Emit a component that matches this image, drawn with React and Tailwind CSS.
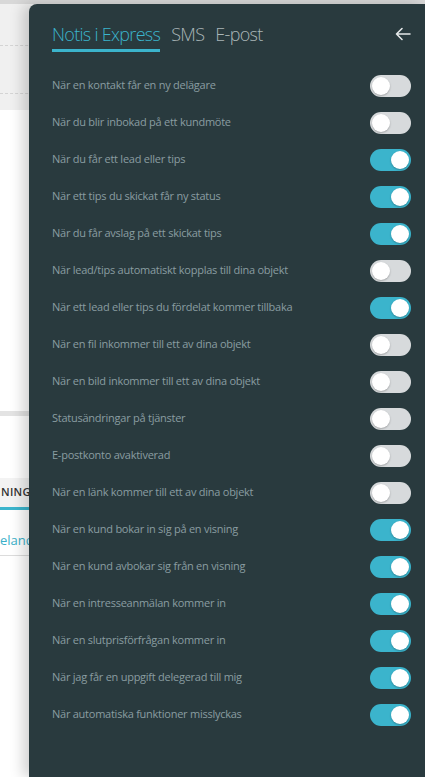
import React from "react";

const rows = [
  ["När en kontakt får en ny delägare", false],
  ["När du blir inbokad på ett kundmöte", false],
  ["När du får ett lead eller tips", true],
  ["När ett tips du skickat får ny status", true],
  ["När du får avslag på ett skickat tips", true],
  ["När lead/tips automatiskt kopplas till dina objekt", false],
  ["När ett lead eller tips du fördelat kommer tillbaka", true],
  ["När en fil inkommer till ett av dina objekt", false],
  ["När en bild inkommer till ett av dina objekt", false],
  ["Statusändringar på tjänster", false],
  ["E-postkonto avaktiverad", false],
  ["När en länk kommer till ett av dina objekt", false],
  ["När en kund bokar in sig på en visning", true],
  ["När en kund avbokar sig från en visning", true],
  ["När en intresseanmälan kommer in", true],
  ["När en slutprisförfrågan kommer in", true],
  ["När jag får en uppgift delegerad till mig", true],
  ["När automatiska funktioner misslyckas", true],
];

function Toggle({ on }) {
  return (
    <div
      className={
        on
          ? "w-[41px] h-[22px] rounded-full bg-[#3bb4cc] flex items-center justify-end px-[2px]"
          : "w-[41px] h-[22px] rounded-full bg-[#d7dadc] flex items-center justify-start px-[2px]"
      }
    >
      <div className="w-[18px] h-[18px] rounded-full bg-white shadow-[0_1px_2px_rgba(0,0,0,0.25)]" />
    </div>
  );
}

export default function App() {
  return (
    <div
      className="relative w-[425px] h-[777px] overflow-hidden bg-[#e2e2e2]"
      style={{ fontFamily: "'Open Sans', 'Noto Sans', sans-serif" }}
    >
      {/* background page */}
      <div className="flex flex-col h-full">
        <div className="h-[4px] bg-[#d8d8d8]" />
        <div className="h-[106px] bg-[#f0f0f0] flex flex-col">
          <div className="h-[42px] border-b border-dashed border-[#d4d4d4]" />
          <div className="h-[48px] border-b border-dashed border-[#d4d4d4]" />
        </div>
        <div className="h-[301px] bg-white" />
        <div className="h-[5px] bg-[#e3e3e3]" />
        <div className="flex-1 bg-white flex flex-col">
          <div className="h-[62px]" />
          <div className="h-[29px] bg-[#f3f3f3] flex items-center">
            <span className="pl-[1px] text-[11px] font-semibold text-[#333] tracking-[0.3px]">NING</span>
          </div>
          <div className="h-[3px] bg-[#3bb4cc]" />
          <div className="h-[46px] border-b border-[#dcdcdc] pt-[22px]">
            <span className="block text-[13px] leading-[16px] text-[#3bb0c9]">elande</span>
          </div>
        </div>
      </div>

      {/* drawer */}
      <div className="absolute left-[29px] top-[4px] right-0 bottom-0 bg-[#293a3e] rounded-tl-[8px] shadow-[-6px_0_14px_rgba(0,0,0,0.18)] pl-[23px] pr-[14px] pt-[18px]">
        <div className="flex items-start justify-between">
          <div className="flex items-start gap-[11px]">
            <div className="flex flex-col">
              <span className="text-[18px] leading-[24px] font-light text-[#3bb4cc] tracking-[-0.7px]">Notis i Express</span>
              <div className="mt-[3px] h-[3px] bg-[#3bb4cc] w-full" />
            </div>
            <span className="text-[18px] leading-[24px] font-light text-[#a9b6b8] tracking-[-0.7px]">SMS</span>
            <span className="text-[18px] leading-[24px] font-light text-[#a9b6b8] tracking-[-0.7px]">E-post</span>
          </div>
          <svg width="18" height="18" viewBox="0 0 18 18" className="mt-[3px] mr-[-1px]" fill="none" stroke="#e4e8e9" strokeWidth="1.6" strokeLinecap="round" strokeLinejoin="round">
            <path d="M16 9H2.5M8 3.5L2.5 9L8 14.5" />
          </svg>
        </div>
        <div className="mt-[15px] flex flex-col">
          {rows.map(([label, on]) => (
            <div key={label} className="h-[37px] flex items-center justify-between">
              <span className="text-[11px] text-[#8a9da1] tracking-[-0.25px]">{label}</span>
              <Toggle on={on} />
            </div>
          ))}
        </div>
      </div>
    </div>
  );
}
